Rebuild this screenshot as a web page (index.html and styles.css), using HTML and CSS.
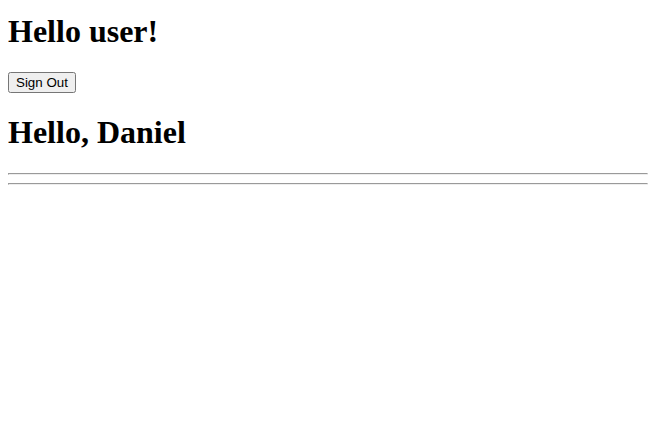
FILE: index.html
```html
<!DOCTYPE html>
<html>
<head>
<meta charset="utf-8">
<link rel="stylesheet" href="styles.css">
</head>
<body class="page">
<h1 class="title first">Hello user!</h1>
<button class="signout">Sign Out</button>
<h1 class="title">Hello, Daniel</h1>
<hr class="rule">
<hr class="rule">
</body>
</html>
```
FILE: styles.css
```css
.page {
  margin: 0 0 8px 8px;
  font-family: "Liberation Serif", "Times New Roman", serif;
}
.title {
  font-size: 2em;
  font-weight: bold;
  margin: 0.67em 0;
}
.title.first {
  margin-top: 13.44px;
}
.signout {
  font-family: "Liberation Sans", Arial, sans-serif;
  font-size: 13.333px;
}
.rule {
  margin: 8px 0;
}
```
